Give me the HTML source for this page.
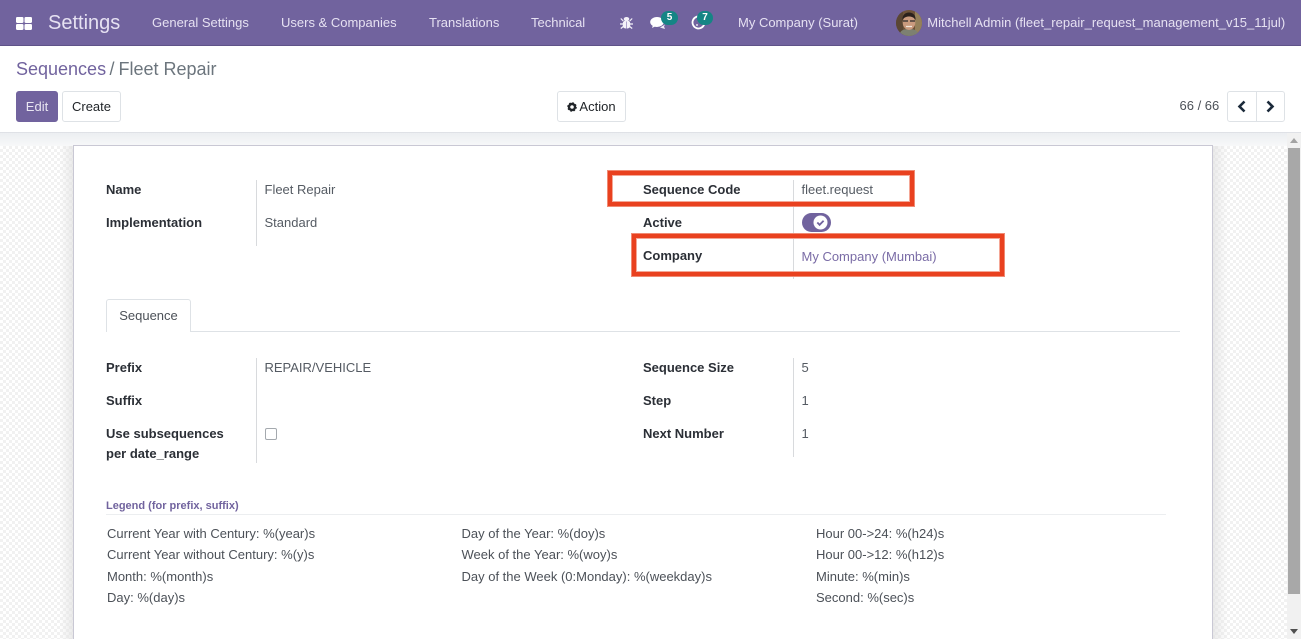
<!DOCTYPE html>
<html><head><meta charset="utf-8"><title>Settings</title>
<style>
*{box-sizing:border-box}
html,body{margin:0;padding:0;width:1301px;height:639px;overflow:hidden}
body{background:#fff;font-family:"Liberation Sans",sans-serif;font-size:13px;color:#4c4c4c}
#wrap{position:absolute;left:0;top:0;width:1301px;height:639px;overflow:hidden;background:#fff}
.a{position:absolute;white-space:nowrap}
#nav{position:absolute;left:0;top:0;width:1301px;height:46px;background:#71639e;border-bottom:1px solid #5f5388}
#nav .t{color:#e6e1f2;line-height:20px;top:13px}
.b{font-weight:700;color:#2b2f36;line-height:20px}
.v{color:#555b63;line-height:20px}
.btn{position:absolute;top:91px;height:31px;border:1px solid #dee2e6;border-radius:3px;background:#fff;color:#212529;line-height:29px;text-align:center}
.sep{position:absolute;width:1px;background:#d8dadd}
.badge{position:absolute;background:#158585;color:#fff;border-radius:9px;font-size:10px;font-weight:700;text-align:center;line-height:14px;height:14px;width:17px}
.red{position:absolute;border:4px solid #e9411f;box-shadow:0 0 0 1px #f08a73,inset 0 0 0 1px #f4a796}
#bg{position:absolute;left:0;top:146px;width:1287px;height:493px;background-color:#fff;background-image:conic-gradient(#f1f1f1 25%,#fff 0 50%,#f1f1f1 0 75%,#fff 0);background-size:6px 6px}
#shade{position:absolute;left:0;top:133px;width:1287px;height:13px;background:linear-gradient(#eceef1,#f7f8f9)}
.legend{line-height:21.4px;color:#4c5158}
</style></head><body>
<div id="wrap">
<div id="nav">
<svg class="a" style="left:16px;top:17px" width="16" height="13" viewBox="0 0 16 13"><rect x="0" y="0" width="7.500" height="6" rx="1.200" fill="#fff"/><rect x="8.500" y="0" width="7.500" height="6" rx="1.200" fill="#fff"/><rect x="0" y="7" width="7.500" height="6" rx="1.200" fill="#fff"/><rect x="8.500" y="7" width="7.500" height="6" rx="1.200" fill="#fff"/></svg>
<div class="a" style="left:48px;top:12px;font-size:20px;line-height:23px;color:#e6e1f2">Settings</div>
<div class="a t" style="left:152px">General Settings</div>
<div class="a t" style="left:281px">Users &amp; Companies</div>
<div class="a t" style="left:429px">Translations</div>
<div class="a t" style="left:531px">Technical</div>
<svg class="a" style="left:620px;top:17px" width="13" height="12" viewBox="0 0 13 12"><g fill="#f4f1f9"><ellipse cx="6.500" cy="2" rx="2.800" ry="2"/><rect x="2.800" y="3.500" width="7.400" height="8" rx="2.800"/></g><path d="M.8 1.500l2.500 2.500M12.200 1.500L9.700 4M0 7h3M13 7h-3M.8 11.500l2.500-2M12.200 11.500l-2.500-2" stroke="#f4f1f9" stroke-width="1.200"/><path d="M6.500 4.500v7" stroke="#9b8fc0" stroke-width=".8"/></svg>
<svg class="a" style="left:650px;top:16px" width="17" height="14" viewBox="0 0 17 14"><ellipse cx="7" cy="6" rx="6.800" ry="5" fill="#fff"/><path d="M3 9l-1 3 4-2z" fill="#fff"/><path d="M10 11.500l5 1.500-1-2.500 1-2z" fill="#f1eef7"/></svg>
<div class="badge" style="left:661px;top:11px">5</div>
<svg class="a" style="left:691px;top:15px" width="15" height="15" viewBox="0 0 15 15"><path d="M9.500 1.800A6 6 0 1 0 13.300 9" fill="none" stroke="#fff" stroke-width="1.800"/><path d="M5 10h2" stroke="#fff" stroke-width="1.200"/></svg>
<div class="badge" style="left:697px;top:11px;width:16px">7</div>
<div class="a t" style="left:738px">My Company (Surat)</div>
<svg class="a" style="left:896px;top:10px" width="26" height="26" viewBox="0 0 26 26"><defs><clipPath id="c"><circle cx="13" cy="13" r="13"/></clipPath></defs><g clip-path="url(#c)"><rect width="26" height="26" fill="#6d5238"/><rect x="0" y="0" width="7" height="26" fill="#5a4634"/><rect x="19" y="0" width="7" height="26" fill="#94805a"/><path d="M3 26c1-6 5-7 10-7s9 1 10 7z" fill="#7d8071"/><ellipse cx="13" cy="12.500" rx="6.300" ry="7.500" fill="#c99a7e"/><path d="M6.500 10c-.5-5 3-7.500 6.500-7.500s7 2.500 6.500 7.500c-1.500-2.500-3.500-3.500-6.500-3.500s-5 1-6.500 3.500z" fill="#2a211c"/><path d="M7 11h5M14 11h5" stroke="#2b2b2b" stroke-width="1.300"/><path d="M10 16.500h6" stroke="#f1e6dc" stroke-width="1.200"/></g></svg>
<div class="a t" style="left:927.3px;letter-spacing:.02px">Mitchell Admin (fleet_repair_request_management_v15_11jul)</div>
</div>

<div class="a" style="left:16px;top:58px;font-size:18px;line-height:22px;color:#71639e">Sequences</div>
<div class="a" style="left:109.500px;top:58px;font-size:18px;line-height:22px;color:#6c757d">/</div>
<div class="a" style="left:118.500px;top:58px;font-size:18px;line-height:22px;color:#6c757d">Fleet Repair</div>
<div class="btn" style="left:16px;width:42px;background:#71639e;border-color:#71639e;color:#e9e6f2">Edit</div>
<div class="btn" style="left:62px;width:59px">Create</div>
<div class="btn" style="left:557px;width:69px;color:#212529"><svg width="10" height="10" viewBox="0 0 10 10" style="vertical-align:-1px;margin-right:2px"><circle cx="5" cy="5" r="3" fill="none" stroke="#212529" stroke-width="2.400"/><circle cx="5" cy="5" r="4.300" fill="none" stroke="#212529" stroke-width="1" stroke-dasharray="1.700 1.700"/></svg>Action</div>
<div class="a" style="left:1179.500px;top:96px;line-height:20px;color:#4c5158">66 / 66</div>
<div class="btn" style="left:1227px;width:30px;border-radius:3px 0 0 3px"></div>
<div class="btn" style="left:1256px;width:29px;border-radius:0 3px 3px 0"></div>
<svg class="a" style="left:1237px;top:100px" width="10" height="13" viewBox="0 0 10 13"><path d="M7.500 1.500L2.500 6.500l5 5" fill="none" stroke="#1b2a3a" stroke-width="2.600"/></svg>
<svg class="a" style="left:1265px;top:100px" width="10" height="13" viewBox="0 0 10 13"><path d="M2.500 1.500l5 5-5 5" fill="none" stroke="#1b2a3a" stroke-width="2.600"/></svg>
<div class="a" style="left:0;top:132px;width:1301px;height:1px;background:#dfe1e6"></div>

<div id="bg"></div>
<div id="shade"></div>
<div class="a" style="left:1287px;top:133px;width:14px;height:506px;background:#f1f1f1"></div>
<div class="a" style="left:1288px;top:148px;width:12px;height:446px;background:#a8a8a8"></div>
<svg class="a" style="left:1289px;top:138px" width="10" height="6"><path d="M5 0l4 5H1z" fill="#a3a3a3"/></svg>
<svg class="a" style="left:1289px;top:629px" width="10" height="6"><path d="M1 0h8L5 5z" fill="#505050"/></svg>

<div class="a" style="left:60px;top:146px;width:14px;height:493px;background:linear-gradient(90deg,rgba(255,255,255,0),rgba(225,225,225,.75))"></div>
<div class="a" style="left:1212px;top:146px;width:16px;height:493px;background:linear-gradient(270deg,rgba(255,255,255,0),rgba(225,225,225,.75))"></div>
<div class="a" style="left:73px;top:145px;width:1140px;height:494px;background:#fff;border:1px solid #c9c8d4;border-bottom:0"></div>

<div class="sep" style="left:256px;top:180px;height:66px"></div>
<div class="sep" style="left:793px;top:180px;height:99px"></div>
<div class="a b" style="left:106px;top:180px">Name</div>
<div class="a v" style="left:264.500px;top:180px">Fleet Repair</div>
<div class="a b" style="left:106px;top:213px">Implementation</div>
<div class="a v" style="left:264.500px;top:213px">Standard</div>
<div class="a b" style="left:643px;top:180px">Sequence Code</div>
<div class="a v" style="left:801.500px;top:180px">fleet.request</div>
<div class="a b" style="left:643px;top:213px">Active</div>
<div class="a" style="left:802px;top:213px;width:29px;height:19px;border-radius:10px;background:#71639e"></div>
<svg class="a" style="left:813px;top:215px" width="15" height="15" viewBox="0 0 15 15"><circle cx="7.500" cy="7.500" r="7" fill="#fff"/><path d="M4.300 7.500l2.300 2.300 4-4" fill="none" stroke="#71639e" stroke-width="1.800"/></svg>
<div class="a b" style="left:643px;top:246px">Company</div>
<div class="a" style="left:801.500px;top:247px;line-height:20px;color:#7a6ca6">My Company (Mumbai)</div>

<div class="red" style="left:608px;top:171px;width:306px;height:35px"></div>
<div class="red" style="left:632px;top:234px;width:372px;height:42px"></div>

<div class="a" style="left:106px;top:331px;width:1074px;height:1px;background:#dee2e6"></div>
<div class="a" style="left:106px;top:299px;width:85px;height:33px;background:#fff;border:1px solid #dee2e6;border-bottom:0;border-radius:3px 3px 0 0;text-align:center;line-height:32px;color:#4c5158">Sequence</div>

<div class="sep" style="left:256px;top:358px;height:105px"></div>
<div class="sep" style="left:793px;top:358px;height:99px"></div>
<div class="a b" style="left:106px;top:358px">Prefix</div>
<div class="a v" style="left:264.500px;top:358px">REPAIR/VEHICLE</div>
<div class="a b" style="left:106px;top:391px">Suffix</div>
<div class="a b" style="left:106px;top:424px">Use subsequences</div>
<div class="a b" style="left:106px;top:444px">per date_range</div>
<div class="a" style="left:265px;top:428px;width:12px;height:12px;border:1px solid #a4a9ae;border-radius:2px;background:#fff"></div>
<div class="a b" style="left:643px;top:358px">Sequence Size</div>
<div class="a v" style="left:801.500px;top:358px">5</div>
<div class="a b" style="left:643px;top:391px">Step</div>
<div class="a v" style="left:801.500px;top:391px">1</div>
<div class="a b" style="left:643px;top:424px">Next Number</div>
<div class="a v" style="left:801.500px;top:424px">1</div>

<div class="a" style="left:106px;top:499px;font-size:11px;font-weight:700;line-height:14px;color:#71639e">Legend (for prefix, suffix)</div>
<div class="a" style="left:106px;top:514px;width:1060px;height:1px;background:#eceef0"></div>
<div class="a legend" style="left:107px;top:523px">Current Year with Century: %(year)s<br>Current Year without Century: %(y)s<br>Month: %(month)s<br>Day: %(day)s</div>
<div class="a legend" style="left:461.500px;top:523px">Day of the Year: %(doy)s<br>Week of the Year: %(woy)s<br>Day of the Week (0:Monday): %(weekday)s</div>
<div class="a legend" style="left:816px;top:523px">Hour 00-&gt;24: %(h24)s<br>Hour 00-&gt;12: %(h12)s<br>Minute: %(min)s<br>Second: %(sec)s</div>
</div>
</body></html>
